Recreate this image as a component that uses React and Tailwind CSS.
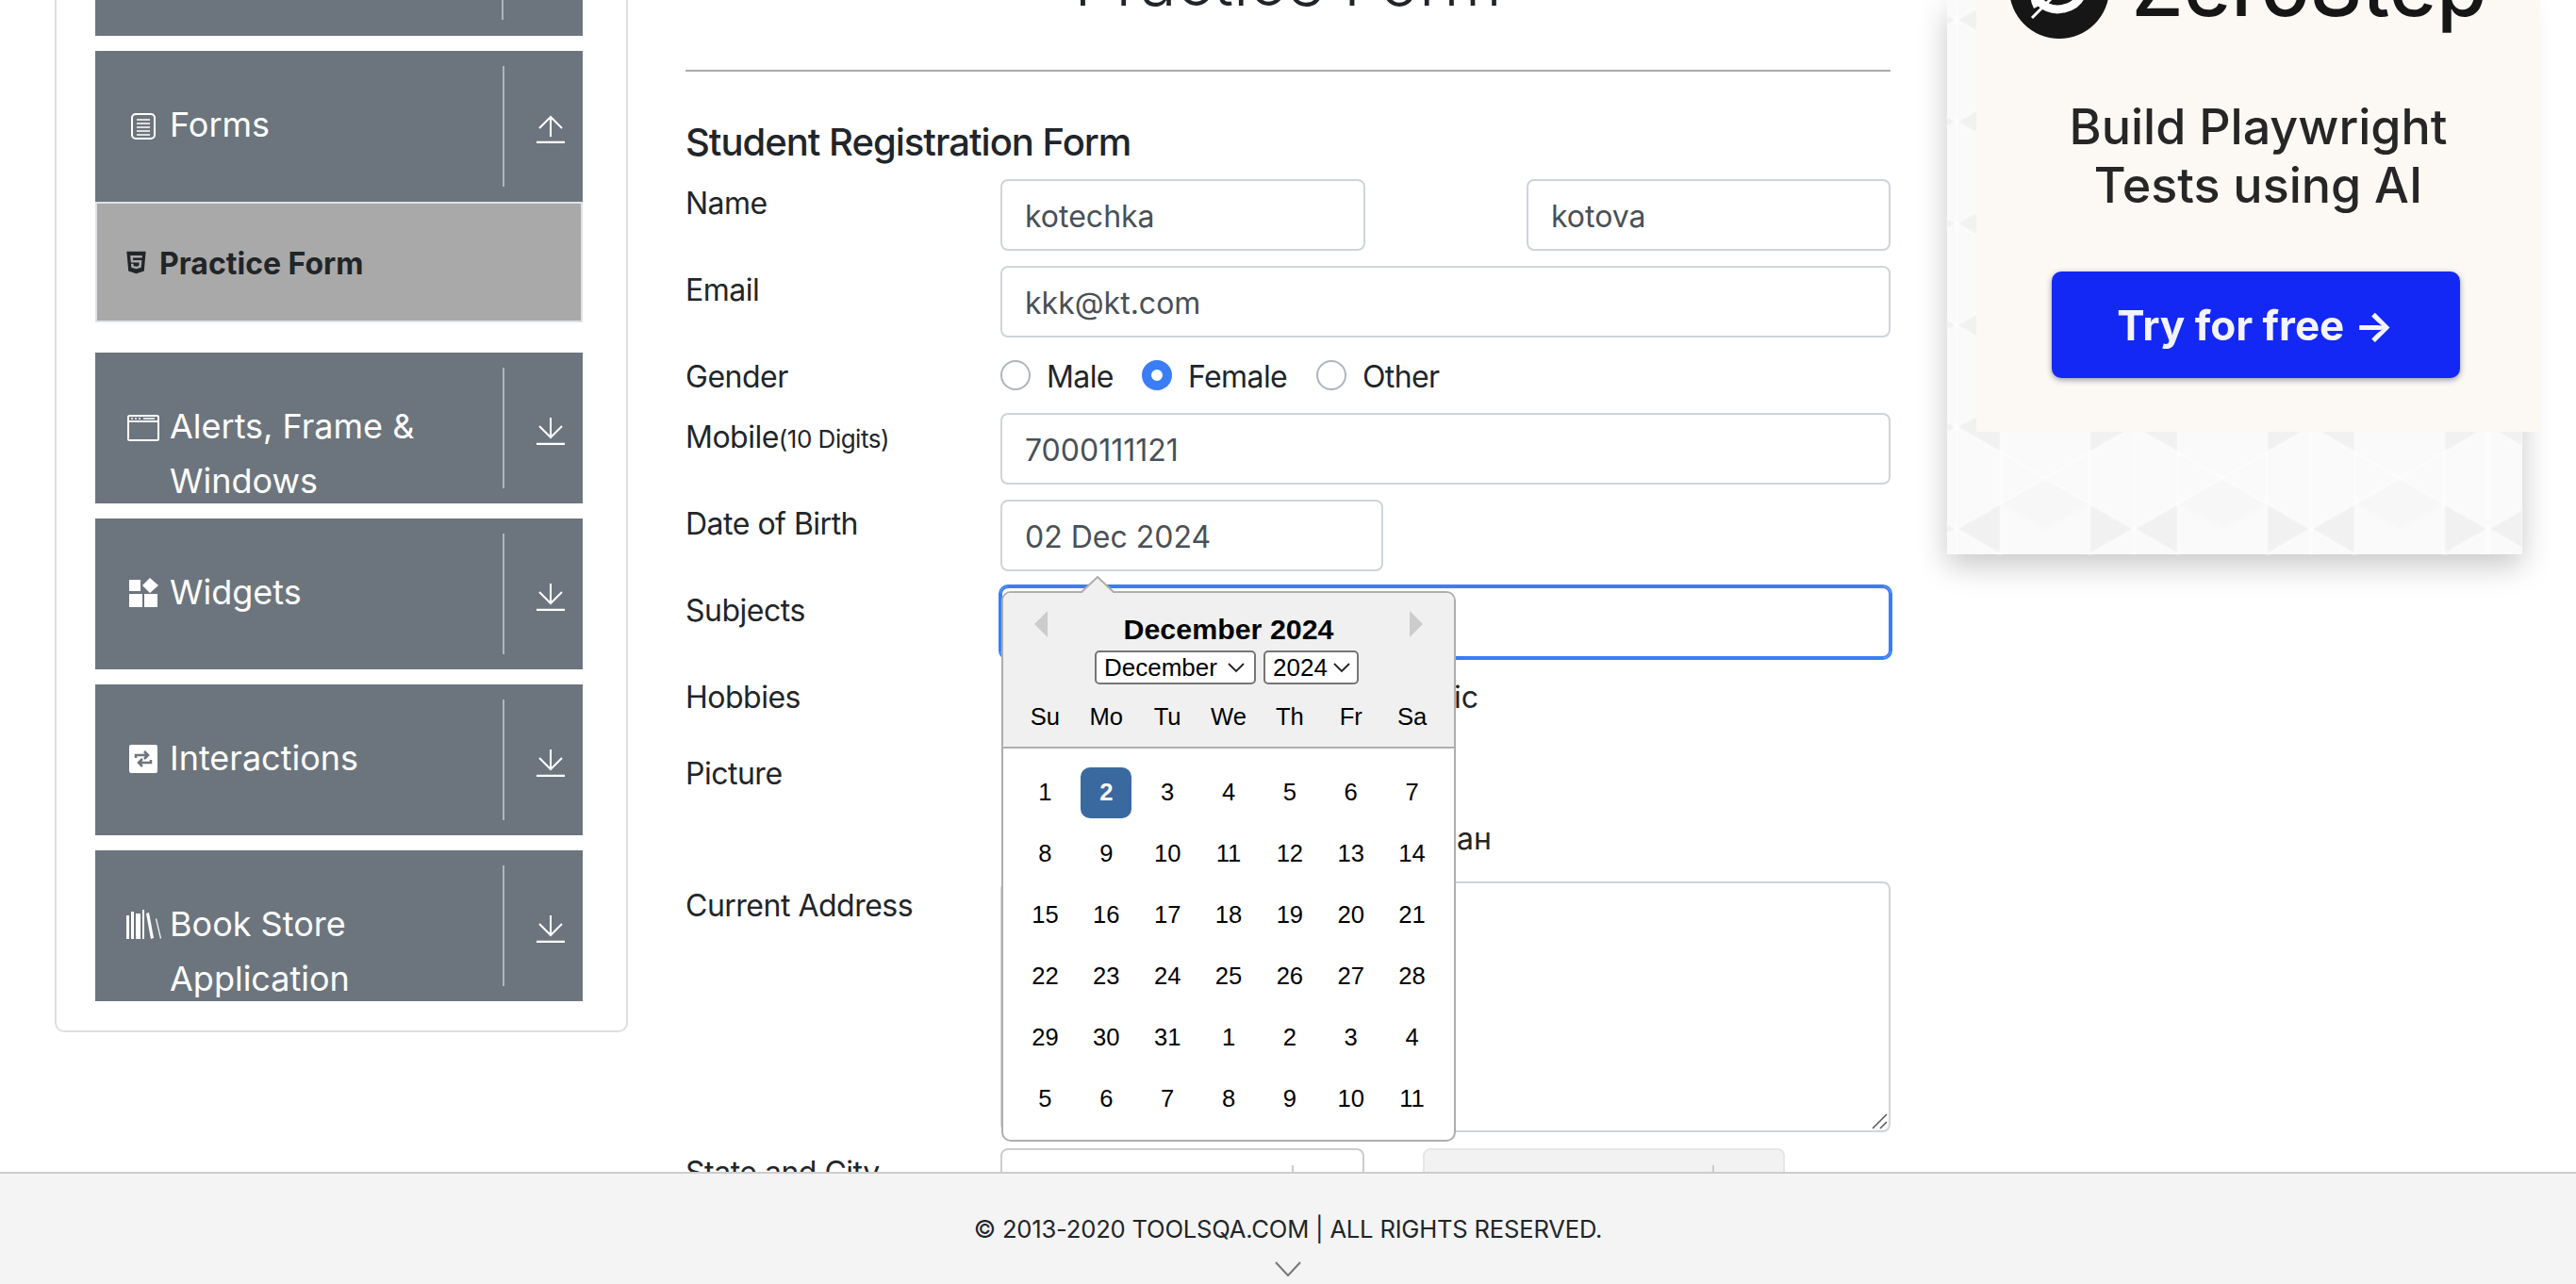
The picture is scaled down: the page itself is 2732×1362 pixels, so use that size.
import React from "react";
import { FaHtml5 } from "react-icons/fa";

const weeks = [
  [1, 2, 3, 4, 5, 6, 7],
  [8, 9, 10, 11, 12, 13, 14],
  [15, 16, 17, 18, 19, 20, 21],
  [22, 23, 24, 25, 26, 27, 28],
  [29, 30, 31, 1, 2, 3, 4],
  [5, 6, 7, 8, 9, 10, 11],
];

const dayNames = ["Su", "Mo", "Tu", "We", "Th", "Fr", "Sa"];

function ArrowIcon({ up }) {
  return (
    <svg width="30" height="30" viewBox="0 0 30 30" fill="none" stroke="white" strokeWidth="2">
      <path d="M0 29h30" strokeWidth="2.5" />
      {up ? <path d="M15 23V2M3 14 15 2l12 12" /> : <path d="M15 1v21M3 10l12 12 12-12" />}
    </svg>
  );
}

function FormIcon() {
  return (
    <svg width="26" height="28" viewBox="0 0 26 28" fill="none" stroke="white" strokeWidth="2">
      <rect x="1" y="1" width="24" height="26" rx="4" />
      <path d="M6 7h14M6 11h14M6 15h14M6 19h14M6 23h14" strokeWidth="1.5" />
    </svg>
  );
}

function WindowIcon() {
  return (
    <svg width="34" height="28" viewBox="0 0 34 28" fill="none" stroke="white" strokeWidth="2">
      <rect x="1" y="1" width="32" height="26" rx="1.5" />
      <path d="M1 7h32" />
      <path d="M4 4h2M8 4h2M12 4h2M17 4h12" strokeWidth="1.5" />
    </svg>
  );
}

function WidgetIcon() {
  return (
    <svg width="31" height="31" viewBox="0 0 31 31" fill="white">
      <rect x="0" y="2" width="12" height="12" />
      <rect x="0" y="17" width="14" height="14" />
      <rect x="16" y="17" width="14" height="14" />
      <path d="m22 0 9 8-9 8-8-8z" />
    </svg>
  );
}

function InteractionIcon() {
  return (
    <svg width="30" height="30" viewBox="0 0 30 30">
      <rect width="30" height="30" rx="2" fill="white" />
      <path d="M7 14v-3h12M16 7l4 4-4 4M23 16v3H11M14 15l-4 4 4 4" fill="none" stroke="#6c757d" strokeWidth="2.5" />
    </svg>
  );
}

function BooksIcon() {
  return (
    <svg width="37" height="31" viewBox="0 0 37 31" fill="white">
      <rect x="0" y="6" width="3" height="25" />
      <rect x="5" y="2" width="3" height="29" />
      <rect x="10" y="4" width="5" height="27" />
      <path d="M17 0h2v31h-2z" />
      <path d="m21 4 3-1 5 27-3 1z" />
      <path d="m31 10 1-1 5 21-1 1z" />
    </svg>
  );
}

function SideBar({ icon, up, lines }) {
  return (
    <div className="flex h-[160px] overflow-hidden bg-[#6c757d] text-white">
      <div className="flex w-[432px]">
        <div className="flex h-[94px] w-[79px] items-end justify-center pl-[23px]">{icon}</div>
        <div className="pt-[50px] text-[36px] leading-[57.6px]">
          {lines.map((line) => (
            <div key={line}>{line}</div>
          ))}
        </div>
      </div>
      <div className="my-[16px] flex w-[85px] justify-center border-l-2 border-[#adb5bd] pt-[52px] pl-[14px]">
        <div className="h-[30px]">
          <ArrowIcon up={up} />
        </div>
      </div>
    </div>
  );
}

function Sidebar() {
  return (
    <div className="ml-[58px] h-[1095px] w-[608px] shrink-0 rounded-b-[10px] border-x-2 border-b-2 border-[#dfdfdf] pr-[46px] pl-[41px]">
      <div className="flex h-[38px] justify-end bg-[#6c757d]">
        <div className="mr-[84px] h-[21px] border-l-2 border-[#adb5bd]" />
      </div>
      <div className="mt-[16px]">
        <SideBar icon={<FormIcon />} up lines={["Forms"]} />
      </div>
      <div className="flex h-[128px] items-center border-2 border-[#dee2e6] bg-[#a9a9a9] pl-[28px] text-[32px] font-bold text-[#212529]">
        <FaHtml5 className="mr-[11px] text-[27px]" />
        <span className="pt-[3px]">Practice Form</span>
      </div>
      <div className="mt-[32px] flex flex-col gap-[16px]">
        <SideBar icon={<WindowIcon />} lines={["Alerts, Frame &", "Windows"]} />
        <SideBar icon={<WidgetIcon />} lines={["Widgets"]} />
        <SideBar icon={<InteractionIcon />} lines={["Interactions"]} />
        <SideBar icon={<BooksIcon />} lines={["Book Store", "Application"]} />
      </div>
    </div>
  );
}

function Field({ className = "", children }) {
  return (
    <div className={`flex h-[76px] items-center rounded-[8px] border-2 border-[#ced4da] bg-white pt-[3px] pl-[24px] text-[#495057] ${className}`}>
      {children}
    </div>
  );
}

function Row({ label, className = "", children }) {
  return (
    <div className={`flex ${className}`}>
      <div className="h-[48px] w-[334px] shrink-0 leading-[51px] tracking-[-0.5px]">{label}</div>
      <div className="min-w-0 flex-1">{children}</div>
    </div>
  );
}

function Radio({ checked, label, className = "" }) {
  return (
    <div className={`flex items-center gap-[17px] ${className}`}>
      <div className={checked ? "size-[32px] rounded-full border-[10px] border-[#3b7df6] bg-white" : "size-[32px] rounded-full border-2 border-[#adb5bd] bg-white"} />
      <span className="pt-[3px] tracking-[-0.6px]">{label}</span>
    </div>
  );
}

function Chevron() {
  return (
    <svg width="18" height="11" viewBox="0 0 18 11" fill="none" stroke="#222" strokeWidth="1.8">
      <path d="m1 1 8 8 8-8" />
    </svg>
  );
}

function Calendar() {
  return (
    <div className="absolute top-[97px] left-[335px] z-10 w-[482px] rounded-[10px] border-2 border-[#aeaeae] bg-white font-['Liberation_Sans',sans-serif] text-black">
      <svg className="absolute -top-[18px] left-[82px]" width="36" height="19" viewBox="0 0 36 19">
        <path d="M0 18 18 1l18 17" fill="#f0f0f0" stroke="#aeaeae" strokeWidth="2" />
      </svg>
      <div className="relative h-[165px] rounded-t-[9px] border-b-2 border-[#aeaeae] bg-[#f0f0f0] text-center">
        <div className="absolute top-[19px] left-[33px] h-0 w-0 border-y-[14px] border-r-[14px] border-y-transparent border-r-[#ccc]" />
        <div className="absolute top-[19px] right-[33px] h-0 w-0 border-y-[14px] border-l-[14px] border-y-transparent border-l-[#ccc]" />
        <div className="pt-[20px] text-[30.4px] leading-[36px] font-bold">December 2024</div>
        <div className="mt-[5px] flex justify-center gap-[8px] pr-[4px] text-[26px] leading-[30px]">
          <div className="flex h-[36px] w-[171px] items-center justify-between rounded-[5px] border-2 border-[#767676] bg-white pr-[10px] pl-[8px]">
            December
            <Chevron />
          </div>
          <div className="flex h-[36px] w-[101px] items-center justify-between rounded-[5px] border-2 border-[#767676] bg-white pr-[7px] pl-[8px]">
            2024
            <Chevron />
          </div>
        </div>
        <div className="mt-[15px] flex px-[12px] text-[25.6px] leading-[38px]">
          {dayNames.map((d) => (
            <div key={d} className="w-[65px]">
              {d}
            </div>
          ))}
        </div>
      </div>
      <div className="px-[12px] pt-[14px] pb-[11px] text-[25.6px]">
        {weeks.map((week, w) => (
          <div key={w} className="flex h-[65px] items-center">
            {week.map((day, i) => (
              <div key={i} className="flex w-[65px] justify-center">
                <div className={w === 0 && i === 1 ? "flex h-[54px] w-[54px] items-center justify-center rounded-[10px] bg-[#3a69a0] font-bold text-white" : "flex h-[54px] w-[54px] items-center justify-center"}>
                  {day}
                </div>
              </div>
            ))}
          </div>
        ))}
      </div>
    </div>
  );
}

function MainForm() {
  return (
    <div className="ml-[61px] w-[1278px] shrink-0 text-[32px] text-[#212529]">
      <div className="h-[74px] overflow-hidden text-center">
        <h1 className="-mt-[55px] text-[70.5px] leading-[72px] font-light">Practice Form</h1>
      </div>
      <div className="h-[2px] bg-[#aaa]" />
      <h5 className="mt-[50px] text-[40px] leading-[50px] font-medium tracking-[-1px]">Student Registration Form</h5>
      <div className="mt-[14px] flex flex-col gap-[16px]">
        <Row label="Name">
          <div className="flex justify-between">
            <Field className="w-[387px]">kotechka</Field>
            <Field className="w-[386px]">kotova</Field>
          </div>
        </Row>
        <Row label="Email">
          <Field>kkk@kt.com</Field>
        </Row>
        <Row label="Gender">
          <div className="flex h-[48px] items-center">
            <Radio label="Male" className="w-[150px]" />
            <Radio checked label="Female" className="w-[185px]" />
            <Radio label="Other" />
          </div>
        </Row>
        <Row
          label={
            <>
              Mobile<span className="text-[26px]">(10 Digits)</span>
            </>
          }
        >
          <Field>7000111121</Field>
        </Row>
        <Row label="Date of Birth" className="relative">
          <Field className="w-[406px]">02 Dec 2024</Field>
          <Calendar />
        </Row>
        <Row label="Subjects">
          <div className="h-[76px] rounded-[8px] border-2 border-[#3b7df6] ring-2 ring-[#3b7df6]" />
        </Row>
        <Row label="Hobbies">
          <div className="flex h-[48px] items-center justify-end pt-[3px] pr-[437px]">Music</div>
        </Row>
        <Row label="Picture" className="mt-[17px]">
          <div className="h-[124px] w-[521px] pt-[71px] text-right leading-[48px]">Файл не выбран</div>
        </Row>
        <Row label="Current Address">
          <div className="relative h-[266px] rounded-[8px] border-2 border-[#ced4da] bg-white">
            <svg className="absolute right-[1px] bottom-[1px]" width="18" height="18" viewBox="0 0 18 18" stroke="#555" strokeWidth="1.5">
              <path d="M2 17 17 2M10 17l7-7" />
            </svg>
          </div>
        </Row>
        <Row label="State and City" className="mt-[1px]">
          <div className="flex gap-[62px]">
            <div className="flex h-[76px] w-[386px] justify-end rounded-[8px] border-2 border-[#cccccc] bg-white pt-[16px] pr-[73px]">
              <div className="h-[40px] border-l-2 border-[#cccccc]" />
            </div>
            <div className="flex h-[76px] w-[384px] justify-end rounded-[8px] border-2 border-[#e6e6e6] bg-[#f2f2f2] pt-[16px] pr-[73px]">
              <div className="h-[40px] border-l-2 border-[#cccccc]" />
            </div>
          </div>
        </Row>
      </div>
    </div>
  );
}

function Ad() {
  return (
    <div className="ml-[60px] w-[610px] shrink-0">
      <div className="relative h-[588px] bg-[#fafafa] shadow-[0_12px_30px_rgba(0,0,0,0.22)]">
        <svg className="absolute inset-0 h-full w-full blur-[1px]" viewBox="0 0 610 588" preserveAspectRatio="none">
          <defs>
            <pattern id="tri" width="188" height="108" patternUnits="userSpaceOnUse" x="-84" y="507">
              <path d="M94 54 141 27v54zM94 54 47 27v54z" fill="#f1f1f1" />
              <path d="M141 27l47-27v54zM47 27 0 0v54z" fill="#f7f7f7" />
              <path d="M0 0 94 54 188 0M0 108l94-54 94 54M47 0v108M94 0v108M141 0v108" stroke="#fff" strokeWidth="1.5" fill="none" />
            </pattern>
          </defs>
          <rect width="610" height="588" fill="url(#tri)" />
        </svg>
        <div className="relative ml-[31px] flex h-[458px] w-[598px] flex-col items-center bg-[#fcf9f4]">
          <div className="-mt-[65px] mr-[22px] flex h-[106px] items-start gap-[24px] blur-[0.7px]">
            <svg width="106" height="106" viewBox="0 0 106 106">
              <circle cx="53" cy="53" r="53" fill="#161616" />
              <path d="M30 72c-8-16 0-34 18-38 12-3 24 2 29 12" fill="none" stroke="white" strokeWidth="9" />
              <path d="M76 36c8 16 0 34-18 38-12 3-24-2-29-12" fill="none" stroke="white" strokeWidth="9" />
              <path d="M24 84 84 24" stroke="white" strokeWidth="3" />
            </svg>
            <div className="text-[86px] leading-[102px] font-medium text-[#161616]">ZeroStep</div>
          </div>
          <div className="mt-[63px] text-center text-[52px] leading-[62px] font-medium text-[#262626] blur-[0.7px]">
            <div>Build Playwright</div>
            <div>Tests using AI</div>
          </div>
          <div className="mt-[60px] mr-[6px] flex h-[113px] w-[433px] items-center justify-center rounded-[10px] bg-[#1428f5] text-[44px] font-bold text-[#f3f4ff] shadow-[0_2px_6px_rgba(0,0,40,0.4)]">
            <span className="blur-[0.7px]">Try for free →</span>
          </div>
        </div>
      </div>
    </div>
  );
}

export default function App() {
  return (
    <div className="flex h-screen flex-col overflow-hidden bg-white font-['Inter',sans-serif]">
      <div className="flex min-h-0 flex-1 overflow-hidden">
        <Sidebar />
        <MainForm />
        <Ad />
      </div>
      <footer className="flex h-[119px] shrink-0 flex-col items-center border-t-2 border-[#cccccc] bg-[#f4f4f4] text-[#212529]">
        <div className="mt-[44px] text-[25.6px] leading-[30px] tracking-[-0.2px]">© 2013-2020 TOOLSQA.COM | ALL RIGHTS RESERVED.</div>
        <svg className="mt-[19px]" width="28" height="16" viewBox="0 0 28 16" fill="none" stroke="#777" strokeWidth="2">
          <path d="m1 1 13 14L27 1" />
        </svg>
      </footer>
    </div>
  );
}
